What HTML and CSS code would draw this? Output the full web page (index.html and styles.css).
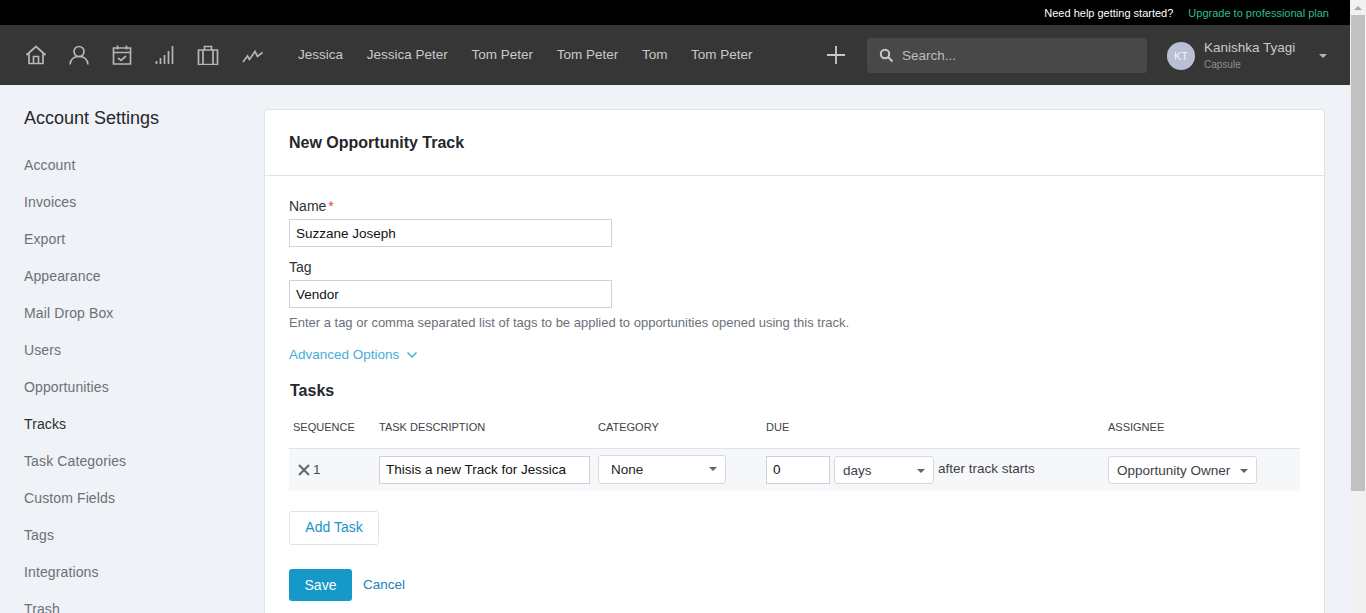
FILE: index.html
```html
<!DOCTYPE html>
<html lang="en">
<head>
<meta charset="utf-8">
<title>New Opportunity Track</title>
<link rel="stylesheet" href="styles.css">
</head>
<body>
<div class="app">
  <div class="page">
    <div class="topbar">
      <span class="help">Need help getting started?</span>
      <a class="upgrade">Upgrade to professional plan</a>
    </div>
    <header class="nav">
      <div class="icons">
        <svg class="ic" width="22" height="20" viewBox="0 0 22 20"><path d="M1.500 10 11 1.500 20.500 10M4 8v10.500h14V8M8.500 18.500v-7h5v7"/></svg>
        <svg class="ic" width="22" height="20" viewBox="0 0 22 20"><circle cx="11" cy="6.500" r="5"/><path d="M2 19.500c.5-5 4-8 9-8s8.500 3 9 8"/></svg>
        <svg class="ic" width="22" height="20" viewBox="0 0 22 20"><path d="M2.500 3h17v16h-17zM2.500 7.500h17M6.500 .5v4M15.500 .5v4M7 13l3 2.500 5-4.500"/></svg>
        <svg class="ic" width="22" height="20" viewBox="0 0 22 20"><path d="M2.500 19v-3M6.500 19v-6M10.500 19v-9M14.500 19v-13M18.500 19v-18"/></svg>
        <svg class="ic" width="22" height="20" viewBox="0 0 22 20"><path d="M1.500 5h19v14.500h-19zM6 5v14.500M16 5v14.500M7.500 5V1.500h7V5"/></svg>
        <svg class="ic trend" width="22" height="20" viewBox="0 0 22 20"><path d="M1 17l4.500-6 2 3.500 5.500-8 2.500 5 5-4"/></svg>
      </div>
      <nav class="links">
        <a>Jessica</a><a>Jessica Peter</a><a>Tom Peter</a><a>Tom Peter</a><a>Tom</a><a>Tom Peter</a>
      </nav>
      <svg class="plus" width="20" height="20" viewBox="0 0 20 20"><path d="M10 1v18M1 10h18"/></svg>
      <div class="search">
        <svg class="search-ic" width="15" height="15" viewBox="0 0 15 15"><circle cx="6" cy="6" r="4.200"/><path d="M9.300 9.300 13.500 13.500"/></svg>
        <span>Search...</span>
      </div>
      <div class="user">
        <div class="avatar">KT</div>
        <div class="who"><div class="uname">Kanishka Tyagi</div><div class="org">Capsule</div></div>
        <i class="caret light"></i>
      </div>
    </header>
    <div class="body">
      <aside class="side">
        <h2>Account Settings</h2>
        <ul>
          <li>Account</li><li>Invoices</li><li>Export</li><li>Appearance</li><li>Mail Drop Box</li><li>Users</li><li>Opportunities</li><li class="on">Tracks</li><li>Task Categories</li><li>Custom Fields</li><li>Tags</li><li>Integrations</li><li>Trash</li>
        </ul>
      </aside>
      <main class="card">
        <h1>New Opportunity Track</h1>
        <div class="content">
          <label class="lbl">Name<span class="req">*</span></label>
          <input class="field wide" value="Suzzane Joseph">
          <label class="lbl tag">Tag</label>
          <input class="field wide" value="Vendor">
          <p class="hint">Enter a tag or comma separated list of tags to be applied to opportunities opened using this track.</p>
          <a class="adv">Advanced Options
            <svg width="12" height="8" viewBox="0 0 12 8"><path d="M1.500 1.500 6 6l4.500-4.500"/></svg>
          </a>
          <h3>Tasks</h3>
          <div class="thead">
            <span class="first">SEQUENCE</span><span>TASK DESCRIPTION</span><span>CATEGORY</span><span>DUE</span><span>ASSIGNEE</span>
          </div>
          <div class="trow">
            <div class="seq">
              <svg class="x" width="14" height="14" viewBox="0 0 14 14"><path d="M2 2l10 10M12 2 2 12"/></svg>
              <span>1</span>
            </div>
            <div><input class="field desc" value="Thisis a new Track for Jessica"></div>
            <div><div class="sel cat">None<i class="caret"></i></div></div>
            <div class="due">
              <input class="field num" value="0">
              <div class="sel days">days<i class="caret"></i></div>
              <span class="after">after track starts</span>
            </div>
            <div><div class="sel owner">Opportunity Owner<i class="caret"></i></div></div>
          </div>
          <button class="add">Add Task</button>
          <div class="actions">
            <button class="save">Save</button>
            <a class="cancel">Cancel</a>
          </div>
        </div>
      </main>
    </div>
  </div>
  <div class="scroll">
    <div class="arrow"></div>
    <div class="thumb"></div>
  </div>
</div>
</body>
</html>
```
FILE: styles.css
```css
* { box-sizing: border-box; }
html, body { margin: 0; height: 613px; overflow: hidden; }
body { font-family: "Liberation Sans", Arial, sans-serif; font-size: 14px; color: #24272b; background: #eff2f6; }
.app { display: flex; height: 613px; overflow: hidden; }
.page { flex: 1; min-width: 0; display: flex; flex-direction: column; }

.topbar { height: 25px; background: #000; display: flex; align-items: center; justify-content: flex-end; gap: 15px; padding: 0 21px 0 0; font-size: 11px; flex: none; }
.help { color: #fff; }
.upgrade { color: #2cbd92; }

.nav { height: 60px; background: #363636; display: flex; align-items: center; flex: none; color: #c9c9c9; font-size: 13.5px; }
.icons { display: flex; gap: 21px; padding-left: 25px; width: 298px; }
.ic { fill: none; stroke: #b5b5b5; stroke-width: 1.7; }
.trend { margin-left: 2px; }
.links { display: flex; gap: 23.7px; width: 528px; padding-bottom: 2px; }
.plus { fill: none; stroke: #c9c9c9; stroke-width: 1.800; margin-right: 21px; flex: none; }
.search { width: 280px; height: 35px; margin-top: 1px; background: #484848; border-radius: 3px; display: flex; align-items: center; padding-left: 12px; gap: 8px; flex: none; color: #bdbdbd; }
.search-ic { fill: none; stroke: #c9c9c9; stroke-width: 2; }
.user { display: flex; align-items: center; margin-left: 20px; flex: 1; }
.avatar { width: 28px; height: 28px; border-radius: 50%; background: #b9c0d4; color: #f0f2f7; font-size: 11px; display: flex; align-items: center; justify-content: center; margin-top: 1px; }
.who { margin-left: 9px; width: 115px; }
.uname { font-size: 13.5px; line-height: 16px; color: #c9c9c9; margin-top: -1px; }
.org { font-size: 10px; line-height: 11px; color: #8e8e8e; margin-top: 3px; }

.caret { width: 0; height: 0; border-left: 4px solid transparent; border-right: 4px solid transparent; border-top: 4px solid #5c6470; display: block; }
.caret.light { border-top-color: #b5b5b5; margin-top: 1px; }

.body { flex: 1; display: flex; min-height: 0; overflow: hidden; }
.side { width: 264px; flex: none; padding-left: 24px; }
.side h2 { font-size: 18px; font-weight: 400; line-height: 22px; margin: 22px 0 18px; color: #24272b; }
.side ul { list-style: none; margin: 0; padding: 0; }
.side li { height: 37px; line-height: 37px; color: #6c7078; letter-spacing: 0.12px; }
.side li.on { color: #2b2e33; }

.card { width: 1061px; height: 600px; flex: none; margin-top: 24px; background: #fff; border: 1px solid #dfe3ea; border-radius: 4px 4px 0 0; }
.card h1 { margin: 0; height: 66px; line-height: 65px; padding-left: 24px; font-size: 16px; font-weight: 700; color: #24272b; border-bottom: 1px solid #dfe3ea; }
.content { padding: 22px 23px 0 24px; display: flex; flex-direction: column; align-items: flex-start; }

.lbl { display: block; line-height: 16px; margin-bottom: 5px; color: #2e3136; }
.lbl.tag { margin-top: 12px; }
.req { color: #e8384f; margin-left: 2px; }
.field { height: 28px; border: 1px solid #ccd1e0; border-radius: 0; padding: 0 6px 1px; font: 13.5px "Liberation Sans", Arial, sans-serif; color: #111; background: #fff; outline: none; display: block; }
.wide { width: 323px; padding-bottom: 0; }
.hint { margin: 7px 0 0; font-size: 13px; line-height: 16px; color: #6c7078; }
.adv { margin-top: 16px; line-height: 16px; font-size: 13.5px; color: #45aedb; display: flex; align-items: center; gap: 7px; }
.adv svg { fill: none; stroke: #45aedb; stroke-width: 1.500; }
.content h3 { margin: 18px 0 0 1px; font-size: 16px; line-height: 20px; font-weight: 700; color: #24272b; }

.thead, .trow { display: grid; grid-template-columns: 90px 219px 168px 342px 192px; width: 1011px; }
.thead { height: 39px; margin-top: 9px; align-items: center; font-size: 11px; color: #3d4147; border-bottom: 1px solid #e0e3ea; padding-bottom: 4px; }
.first { padding-left: 4px; }
.trow { height: 42px; background: #f6f7f9; align-items: center; font-size: 13.5px; }
.seq { display: flex; align-items: center; gap: 2px; padding-left: 8px; padding-bottom: 1px; color: #4a4e55; }
.x { fill: none; stroke: #5f6670; stroke-width: 2; }
.desc { width: 211px; }
.num { width: 64px; }
.sel { height: 28px; border: 1px solid #d5d9e3; border-radius: 3px; background: #fff; display: flex; align-items: center; justify-content: space-between; color: #3d4147; padding: 1px 8px 0 8px; }
.cat { width: 128px; height: 29px; padding: 0 8px 1px 12px; color: #24272b; margin-top: -1px; }
.days { width: 100px; }
.owner { width: 149px; }
.due { display: flex; align-items: center; gap: 4px; }
.after { color: #3d4147; margin-top: -3px; }

.add { margin-top: 20px; width: 90px; height: 34px; background: #fff; border: 1px solid #dfe3ea; border-radius: 3px; color: #1a93c8; font: 14px "Liberation Sans", Arial, sans-serif; padding: 0 0 2px; }
.actions { margin-top: 24px; display: flex; align-items: center; gap: 11px; }
.save { width: 63px; height: 32px; background: #1499c9; border: 0; border-radius: 3px; color: #fff; font: 14px "Liberation Sans", Arial, sans-serif; padding: 0 0 1px; }
.cancel { color: #1a84b8; font-size: 13.5px; padding-bottom: 2px; }

.scroll { width: 16px; flex: none; background: #f1f1f1; display: flex; flex-direction: column; align-items: center; }
.arrow { width: 0; height: 0; margin: 6px 0 5px; border-left: 4px solid transparent; border-right: 4px solid transparent; border-bottom: 4px solid #a3a3a3; }
.thumb { width: 14px; height: 476px; background: #c1c1c1; }
```
